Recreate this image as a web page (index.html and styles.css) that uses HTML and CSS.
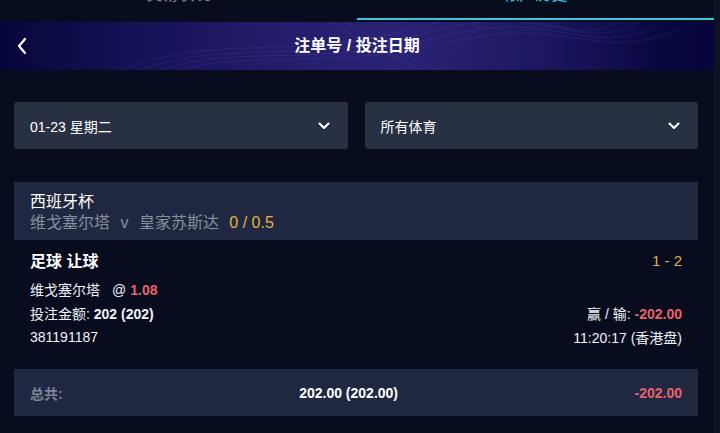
FILE: index.html
```html
<!DOCTYPE html>
<html lang="zh">
<head>
    <meta charset="UTF-8">
    <title>注单号 / 投注日期</title>
    <link rel="stylesheet" href="styles.css">
</head>
<body>
<div class="app">
    <!-- Tabs (scrolled partly out of view) -->
    <nav class="tabs">
        <div class="tab">交易状况</div>
        <div class="tab active">帐户历史</div>
    </nav>

    <!-- Page header -->
    <header class="topbar">
        <svg class="waves" viewBox="0 0 714 48" preserveAspectRatio="none">
            <g fill="none" stroke="#8f86ff" stroke-width="0.6" opacity="0.18">
                <path d="M120 48 C 220 10, 300 40, 420 5 S 560 30, 620 0"/>
                <path d="M140 48 C 230 16, 310 44, 430 10 S 570 34, 640 0"/>
                <path d="M160 48 C 240 22, 320 46, 440 15 S 580 38, 660 4"/>
                <path d="M180 48 C 250 28, 330 48, 450 20 S 590 42, 680 8"/>
                <path d="M330 0 C 360 20, 390 30, 420 48"/>
                <path d="M345 0 C 375 20, 405 30, 435 48"/>
                <path d="M480 0 C 470 20, 450 30, 440 48"/>
            </g>
        </svg>
        <button class="back">
            <svg width="12" height="18" viewBox="0 0 12 18">
                <path d="M9 2 L3 9 L9 16" fill="none" stroke="#fff" stroke-width="2.2" stroke-linecap="round" stroke-linejoin="round"/>
            </svg>
        </button>
        <h1 class="title">注单号 / 投注日期</h1>
    </header>

    <main class="content">
        <div class="filters">
            <div class="select">
                <span>01-23 星期二</span>
                <svg class="caret" width="12" height="8" viewBox="0 0 12 8">
                    <path d="M1.5 1.5 L6 6 L10.5 1.5" fill="none" stroke="#fff" stroke-width="2" stroke-linecap="round" stroke-linejoin="round"/>
                </svg>
            </div>
            <div class="select">
                <span>所有体育</span>
                <svg class="caret" width="12" height="8" viewBox="0 0 12 8">
                    <path d="M1.5 1.5 L6 6 L10.5 1.5" fill="none" stroke="#fff" stroke-width="2" stroke-linecap="round" stroke-linejoin="round"/>
                </svg>
            </div>
        </div>

        <section class="bet">
            <div class="bet-head">
                <div class="league">西班牙杯</div>
                <div class="match">维戈塞尔塔 <span class="vs">v</span> 皇家苏斯达 <span class="hdp">0 / 0.5</span></div>
            </div>
            <div class="bet-body">
                <div class="row row-title">
                    <span class="market">足球 让球</span>
                    <span class="score">1 - 2</span>
                </div>
                <div class="row">
                    <span>维戈塞尔塔<span class="at">@</span><b class="red">1.08</b></span>
                </div>
                <div class="row">
                    <span>投注金额: <b>202 (202)</b></span>
                    <span>赢 / 输: <b class="red">-202.00</b></span>
                </div>
                <div class="row">
                    <span>381191187</span>
                    <span>11:20:17 (香港盘)</span>
                </div>
            </div>
        </section>

        <div class="total">
            <span class="total-label">总共:</span>
            <b>202.00 (202.00)</b>
            <b class="red">-202.00</b>
        </div>
    </main>
</div>
</body>
</html>
```

FILE: styles.css
```css
html,
body {
    margin: 0;
    height: 100%;
}

body {
    background-color: #0b1224;
    font-family: "Liberation Sans", Arial, "Noto Sans CJK SC", sans-serif;
    color: #fff;
    overflow: hidden;
}

.app {
    width: 714px;
    height: 100%;
    background-color: #070d1f;
}

/* Tabs */
.tabs {
    display: flex;
    height: 22px;
    overflow: hidden;
    background-color: #070d1f;
}

.tab {
    flex: 1;
    text-align: center;
    font-size: 16px;
    line-height: 20px;
    margin-top: -15px;
    color: #7b8496;
}

.tab.active {
    color: #3fc5de;
    border-bottom: 2px solid #3fc5de;
    height: 35px;
    box-sizing: border-box;
}

/* Header */
.topbar {
    position: relative;
    display: flex;
    align-items: center;
    justify-content: center;
    height: 48px;
    background: linear-gradient(90deg, #07063a 0%, #141155 18%, #241d6c 40%, #2a2375 55%, #1d1862 75%, #0a0842 92%, #06053a 100%);
    overflow: hidden;
}

.waves {
    position: absolute;
    left: 0;
    top: 0;
    width: 100%;
    height: 100%;
}

.back {
    position: absolute;
    left: 16px;
    top: 15px;
    padding: 0;
    border: none;
    background: none;
    display: flex;
}

.title {
    position: relative;
    margin: 0;
    font-size: 16px;
    font-weight: bold;
    line-height: 20px;
}

/* Content */
.content {
    padding: 32px 16px 0 14px;
}

.filters {
    display: flex;
    gap: 17px;
}

.select {
    flex: 1;
    display: flex;
    align-items: center;
    justify-content: space-between;
    height: 47px;
    padding: 0 18px 0 16px;
    background-color: #283143;
    border-radius: 3px;
    font-size: 14px;
}

.caret {
    display: block;
}

.bet {
    margin-top: 33px;
}

.bet-head {
    height: 58px;
    box-sizing: border-box;
    padding: 9px 16px;
    background-color: #1f2840;
    font-size: 16px;
    line-height: 21px;
}

.match {
    color: #858d9e;
}

.vs {
    margin: 0 6px;
}

.hdp {
    margin-left: 6px;
    color: #e2b33d;
}

.bet-body {
    padding: 10px 16px 20px;
}

.row {
    display: flex;
    justify-content: space-between;
    align-items: center;
    height: 24px;
    font-size: 14px;
    color: #f0f2f6;
}

.row-title {
    height: 20px;
    margin-bottom: 7px;
}

.at {
    margin: 0 4px 0 12px;
}

.market {
    font-size: 16px;
    font-weight: bold;
    color: #fff;
}

.score {
    font-size: 15px;
    color: #e2b33d;
}

.red {
    color: #e8626a;
}

.total {
    display: flex;
    justify-content: space-between;
    align-items: center;
    height: 47px;
    padding: 0 16px;
    background-color: #1f2840;
    font-size: 14px;
}

.total-label {
    font-weight: bold;
    color: #7d8597;
}
```
